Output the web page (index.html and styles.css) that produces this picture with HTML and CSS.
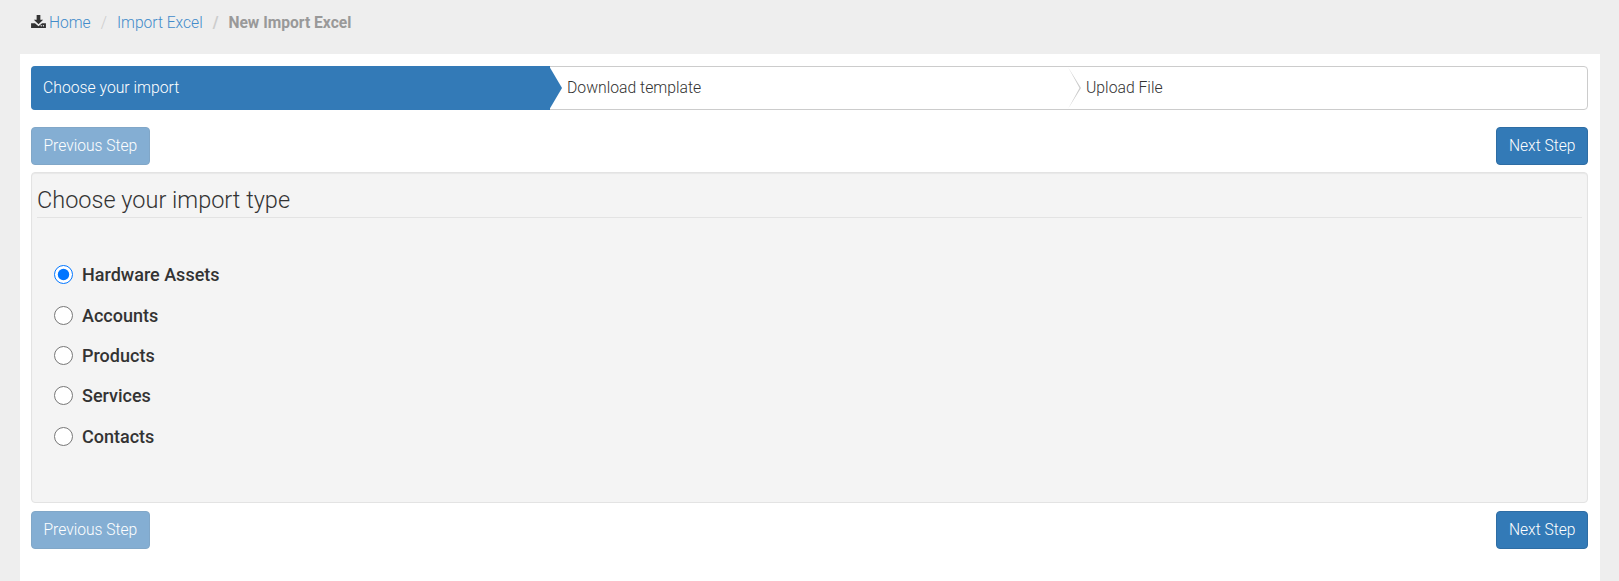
FILE: index.html
```html
<!DOCTYPE html>
<html lang="en">
<head>
    <meta charset="utf-8" />
    <meta name="viewport" content="width=device-width, initial-scale=1.0" />
    <title>New Import Excel</title>
    <link rel="stylesheet" href="styles.css">
</head>
<body>

    <ol class="breadcrumb">
        <li>
            <svg class="crumb-icon" viewBox="0 0 16 14" width="15" height="13" aria-hidden="true">
                <path d="M6 0h4v5h3L8 10 3 5h3z" />
                <path d="M0 9h4.2L8 12l3.8-3H16v5H0zM11.6 11.6a.7.7 0 1 0 0 .01zM14 11.6a.7.7 0 1 0 0 .01z" fill-rule="evenodd" />
            </svg>
            <a href="#">Home</a>
        </li>
        <li><a href="#">Import Excel</a></li>
        <li class="active">New Import Excel</li>
    </ol>

    <div class="card">
        <ul class="steps">
            <li class="step current">Choose your import</li>
            <li class="step">Download template</li>
            <li class="step">Upload File</li>
        </ul>

        <div class="actions">
            <button type="button" class="btn" disabled>Previous Step</button>
            <button type="button" class="btn">Next Step</button>
        </div>

        <div class="well">
            <h3 class="well-title">Choose your import type</h3>
            <form class="options">
                <label class="option"><input type="radio" name="importtype" checked /> Hardware Assets</label>
                <label class="option"><input type="radio" name="importtype" /> Accounts</label>
                <label class="option"><input type="radio" name="importtype" /> Products</label>
                <label class="option"><input type="radio" name="importtype" /> Services</label>
                <label class="option"><input type="radio" name="importtype" /> Contacts</label>
            </form>
        </div>

        <div class="actions actions-bottom">
            <button type="button" class="btn" disabled>Previous Step</button>
            <button type="button" class="btn">Next Step</button>
        </div>
    </div>

</body>
</html>
```

FILE: styles.css
```css
html, body {
    height: 100%;
}

body {
    font-family: Roboto, "Liberation Sans", sans-serif;
    font-weight: 300;
    font-size: 15.75px;
    color: #333;
    background-color: #eee;
    margin: 0;
    padding: 0 19px 0 20px;
    box-sizing: border-box;
    display: flex;
    flex-direction: column;
    overflow: hidden;
}

.breadcrumb {
    list-style: none;
    margin: 0;
    padding: 15px 0 0 11px;
    height: 54px;
    box-sizing: border-box;
    display: flex;
    line-height: 17px;
    font-size: 15.6px;
}

.breadcrumb li {
    display: flex;
    align-items: center;
    height: 17px;
}

.breadcrumb li + li::before {
    content: "/";
    color: #ccc;
    padding: 0 10px;
}

.breadcrumb a {
    color: #428bca;
    text-decoration: none;
}

.breadcrumb .active {
    font-weight: 700;
    color: #999;
}

.crumb-icon {
    fill: #333;
    margin: -5px 3px 0 0;
}

.card {
    flex: 1;
    background-color: #fff;
    padding: 12px 12px 0 11px;
}

.steps {
    list-style: none;
    margin: 0;
    padding: 0;
    height: 44px;
    box-sizing: border-box;
    display: grid;
    grid-template-columns: 518px 519px 1fr;
    border: 1px solid #ccc;
    border-radius: 4px;
    background-color: #fff;
}

.step {
    position: relative;
    padding-left: 17px;
    line-height: 42px;
}

.step + .step::before {
    content: "";
    position: absolute;
    top: 0;
    left: -1px;
    width: 13px;
    height: 42px;
    background: #ccc;
    clip-path: polygon(0 0, 100% 50%, 0 100%, 0 100%, calc(100% - 1.5px) 50%, 0 0);
}

.step.current {
    color: #fff;
    background-color: #337ab7;
    margin: -1px 0 -1px -1px;
    line-height: 44px;
    padding-left: 12px;
    border-radius: 4px 0 0 4px;
}

.step.current::after {
    content: "";
    position: absolute;
    top: 0;
    left: calc(100% - 1px);
    width: 13px;
    height: 44px;
    background-color: #337ab7;
    clip-path: polygon(0 0, 100% 50%, 0 100%);
    z-index: 1;
}

.step.current + .step::before {
    display: none;
}

.actions {
    display: flex;
    justify-content: space-between;
    margin: 17px 0 7px;
}

.actions-bottom {
    margin: 8px 0 0;
}

.btn {
    font-family: inherit;
    font-weight: 300;
    font-size: 15.6px;
    line-height: 20px;
    color: #fff;
    background-color: #337ab7;
    border: 1px solid #2e6da4;
    border-radius: 4px;
    padding: 8px 11.5px;
    height: 38px;
    cursor: pointer;
}

.btn:disabled {
    opacity: 0.6;
    cursor: default;
}

.well {
    height: 331px;
    box-sizing: border-box;
    background-color: #f4f4f4;
    border: 1px solid #e3e3e3;
    border-radius: 4px;
    box-shadow: inset 0 1px 1px rgba(0, 0, 0, 0.05);
    padding: 12px 5px 0;
}

.well-title {
    font-weight: 300;
    font-size: 23.5px;
    line-height: 30px;
    margin: 0;
    padding-bottom: 2px;
    border-bottom: 1px solid #e3e3e3;
}

.options {
    padding: 36.5px 0 0 17px;
}

.option {
    display: flex;
    align-items: center;
    height: 40.4px;
    font-weight: 500;
    font-size: 18px;
    color: #333;
}

.option input {
    width: 19px;
    height: 19px;
    margin: 0 9px 0 0;
}
```
